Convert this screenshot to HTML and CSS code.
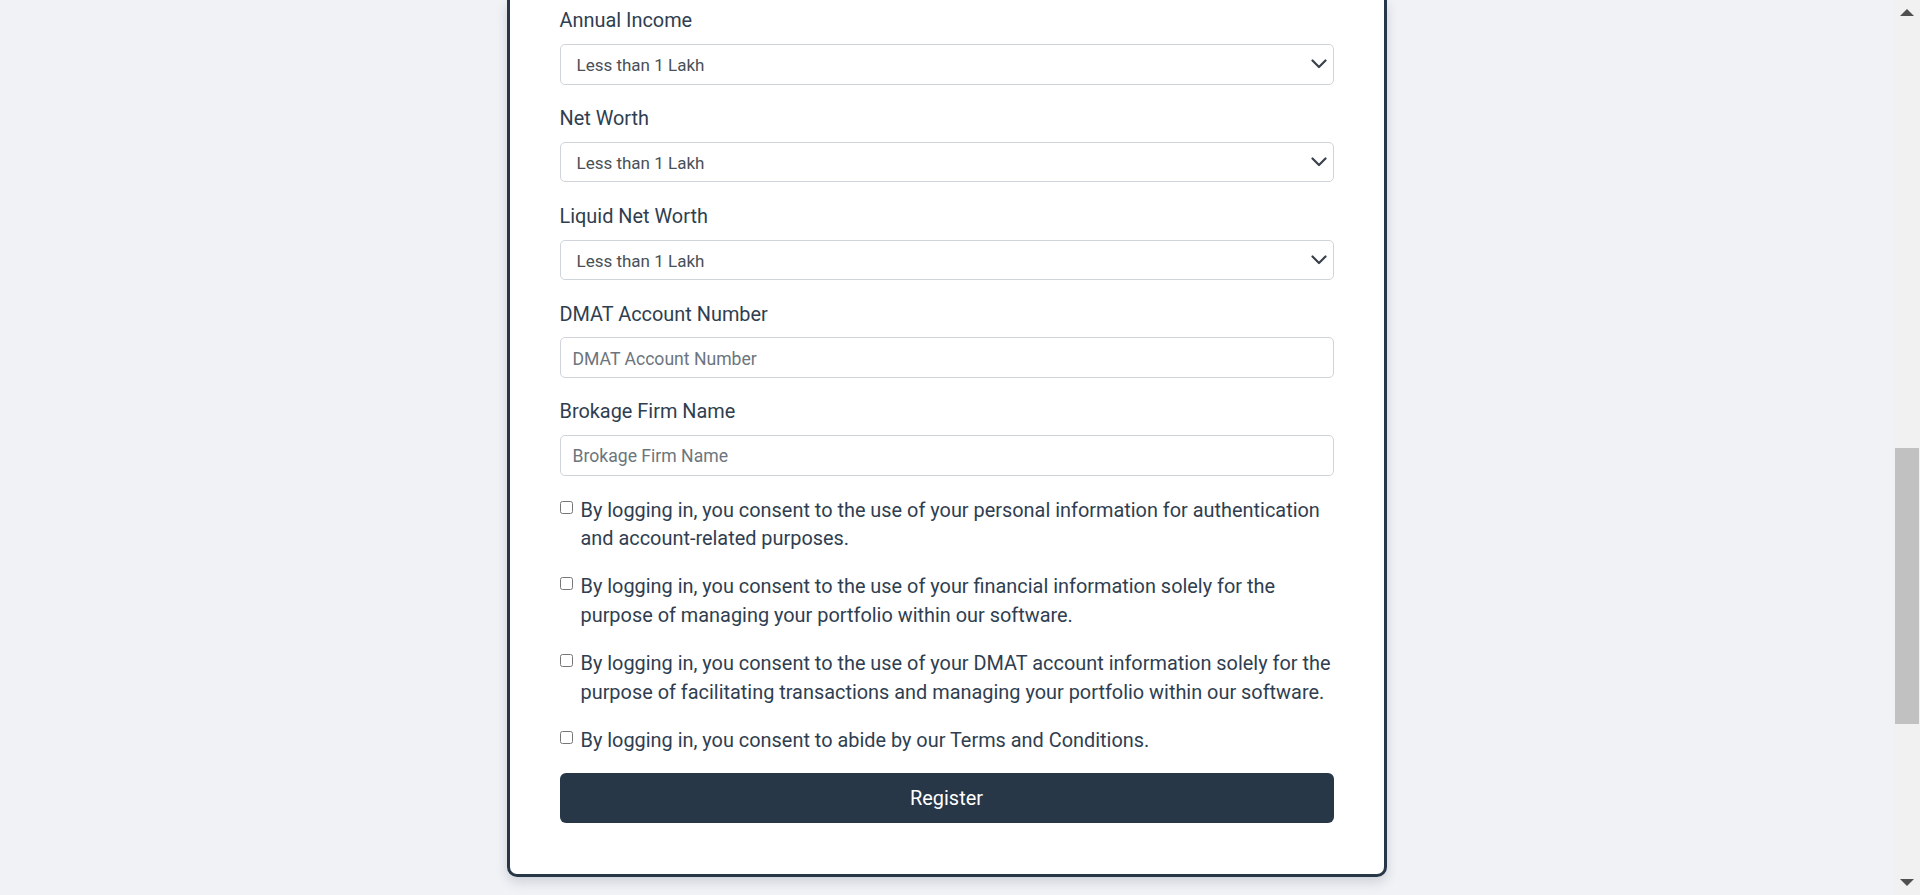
FILE: index.html
```html
<!DOCTYPE html>
<html lang="en">
<head>
<meta charset="utf-8">
<title>Register</title>
<link rel="stylesheet" href="styles.css">
</head>
<body>
<div class="viewport">
  <main class="page">
    <form class="card">
      <div class="field">
        <label class="field-label" for="income">Annual Income</label>
        <div class="select-wrap">
          <select id="income" class="control select"><option>Less than 1 Lakh</option></select>
          <svg class="chevron" viewBox="0 0 16 10" width="16" height="10" aria-hidden="true"><path d="M1.5 1.5 8 8l6.5-6.5" fill="none" stroke="#3a414b" stroke-width="2.2" stroke-linecap="round" stroke-linejoin="round"/></svg>
        </div>
      </div>
      <div class="field">
        <label class="field-label" for="networth">Net Worth</label>
        <div class="select-wrap">
          <select id="networth" class="control select"><option>Less than 1 Lakh</option></select>
          <svg class="chevron" viewBox="0 0 16 10" width="16" height="10" aria-hidden="true"><path d="M1.5 1.5 8 8l6.5-6.5" fill="none" stroke="#3a414b" stroke-width="2.2" stroke-linecap="round" stroke-linejoin="round"/></svg>
        </div>
      </div>
      <div class="field">
        <label class="field-label" for="liquid">Liquid Net Worth</label>
        <div class="select-wrap">
          <select id="liquid" class="control select"><option>Less than 1 Lakh</option></select>
          <svg class="chevron" viewBox="0 0 16 10" width="16" height="10" aria-hidden="true"><path d="M1.5 1.5 8 8l6.5-6.5" fill="none" stroke="#3a414b" stroke-width="2.2" stroke-linecap="round" stroke-linejoin="round"/></svg>
        </div>
      </div>
      <div class="field">
        <label class="field-label" for="dmat">DMAT Account Number</label>
        <input id="dmat" class="control" type="text" placeholder="DMAT Account Number">
      </div>
      <div class="field">
        <label class="field-label" for="broker">Brokage Firm Name</label>
        <input id="broker" class="control" type="text" placeholder="Brokage Firm Name">
      </div>

      <label class="check"><input type="checkbox"><span>By logging in, you consent to the use of your personal information for authentication and account-related purposes.</span></label>
      <label class="check"><input type="checkbox"><span>By logging in, you consent to the use of your financial information solely for the purpose of managing your portfolio within our software.</span></label>
      <label class="check"><input type="checkbox"><span>By logging in, you consent to the use of your DMAT account information solely for the purpose of facilitating transactions and managing your portfolio within our software.</span></label>
      <label class="check"><input type="checkbox"><span>By logging in, you consent to abide by our Terms and Conditions.</span></label>

      <button class="btn" type="submit">Register</button>
    </form>
  </main>
  <div class="scrollbar" aria-hidden="true">
    <div class="sb-btn sb-up"></div>
    <div class="sb-track"><div class="sb-thumb"></div></div>
    <div class="sb-btn sb-down"></div>
  </div>
</div>
</body>
</html>
```
FILE: styles.css
```css
* {
  box-sizing: border-box;
}

html,
body {
  margin: 0;
  height: 100%;
}

body {
  font-family: Roboto, "Liberation Sans", sans-serif;
  background: #f0f2f6;
  color: #2f3e50;
  overflow: hidden;
}

.viewport {
  display: flex;
  height: 895px;
}

.page {
  flex: 1;
  min-width: 0;
  display: flex;
  justify-content: center;
  align-items: flex-start;
}

.card {
  width: 880px;
  display: flex;
  flex-direction: column;
  background: #fff;
  border: 3px solid #283748;
  border-top: 0;
  border-radius: 0 0 10px 10px;
  padding: 5.6px 50px 50.4px;
  box-shadow: 0 5px 12px rgba(30, 40, 60, 0.16);
}

.field {
  display: flex;
  flex-direction: column;
  margin-bottom: 18.8px;
}

.field-label {
  font-size: 19.9px;
  line-height: 28.8px;
  padding-top: 1.6px;
  margin-bottom: 8px;
}

.control {
  width: 100%;
  height: 40.6px;
  border: 1px solid #ced4da;
  border-radius: 5px;
  background: #fff;
  font-family: inherit;
  font-size: 17.6px;
  color: #495057;
  padding: 2px 12px 0;
  outline: none;
}

.control::placeholder {
  color: #6c757d;
}

.select-wrap {
  display: grid;
}

.select-wrap > * {
  grid-area: 1 / 1;
}

.select {
  appearance: none;
  -webkit-appearance: none;
  padding-left: 16px;
  padding-right: 36px;
  font-size: 17px;
}

.chevron {
  justify-self: end;
  align-self: center;
  margin-right: 7px;
  pointer-events: none;
}

.check {
  display: flex;
  align-items: flex-start;
  font-size: 19.9px;
  line-height: 28.8px;
  margin-bottom: 17.2px;
}

.check span {
  padding-top: 2px;
}

.check input {
  flex: none;
  width: 13px;
  height: 13px;
  margin: 6px 8px 0 0;
}

.btn {
  height: 50.3px;
  border: 0;
  border-radius: 6px;
  background: #283748;
  color: #fff;
  font-family: inherit;
  font-size: 19.9px;
  font-weight: 400;
  padding-top: 2.5px;
}

/* classic browser scrollbar as seen in the capture */
.scrollbar {
  flex: none;
  width: 27px;
  background: #f1f1f1;
  display: flex;
  flex-direction: column;
}

.sb-btn {
  height: 25px;
  display: flex;
  align-items: center;
  justify-content: center;
}

.sb-up::before,
.sb-down::before {
  content: "";
  border-left: 7px solid transparent;
  border-right: 7px solid transparent;
}

.sb-up::before {
  border-bottom: 7px solid #505050;
}

.sb-down::before {
  border-top: 7px solid #505050;
}

.sb-track {
  flex: 1;
  padding: 423px 1px 0 2px;
}

.sb-thumb {
  height: 276px;
  background: #c1c1c1;
}
```
